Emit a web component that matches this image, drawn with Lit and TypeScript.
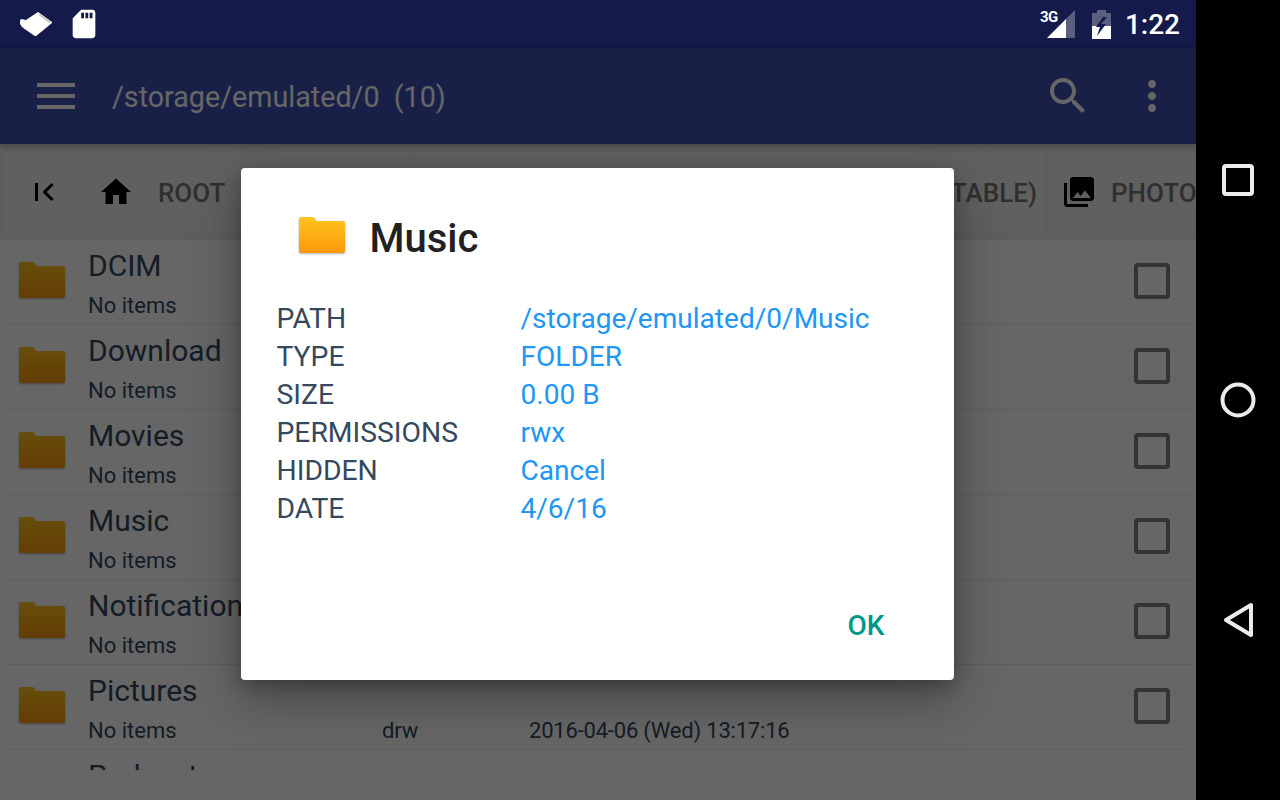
import { LitElement, html, css, svg } from "lit";
import { customElement } from "lit/decorators.js";

const folder = (id: string) => html`<svg class="folder" viewBox="0 0 47 37" width="47" height="37">
  <defs><linearGradient id=${id} x1="0" y1="0" x2="0" y2="1"><stop offset="0" stop-color="#ffc41c"/><stop offset="1" stop-color="#fb980a"/></linearGradient></defs>
  <path d="M2 0h11q2 0 3 2l1 2h27q2 0 2 2v28q0 2-2 2H2q-2 0-2-2V2q0-2 2-2z" fill="url(#${id})"/>
</svg>`;

const icon = (d: string, size: number) => html`<svg viewBox="0 0 24 24" width=${size} height=${size}>${svg`<path d=${d}/>`}</svg>`;

const rows = ["DCIM", "Download", "Movies", "Music", "Notifications", "Pictures", "Podcasts"];
const tabs: [string, string, number, string][] = [
  ["M10 20v-6h4v6h5v-8h3L12 3 2 12h3v8z", "ROOT", 160, ""],
  ["M10 20v-6h4v6h5v-8h3L12 3 2 12h3v8z", "DEVICE", 162, ""],
  ["M18 2h-8L4.02 8 4 20c0 1.1.9 2 2 2h12c1.1 0 2-.9 2-2V4c0-1.1-.9-2-2-2z", "INTERNAL STORAGE", 311, ""],
  ["M18 2h-8L4.02 8 4 20c0 1.1.9 2 2 2h12c1.1 0 2-.9 2-2V4c0-1.1-.9-2-2-2z", "USB (PORTABLE)", 317, "end"],
  ["M22 16V4c0-1.1-.9-2-2-2H8c-1.1 0-2 .9-2 2v12c0 1.1.9 2 2 2h12c1.1 0 2-.9 2-2zm-11-4l2.03 2.71L16 11l4 5H8l3-4zM2 6v14c0 1.1.9 2 2 2h14v-2H4V6H2z", "PHOTOS", 240, "tight"],
];
const info = [
  ["PATH", "/storage/emulated/0/Music"],
  ["TYPE", "FOLDER"],
  ["SIZE", "0.00 B"],
  ["PERMISSIONS", "rwx"],
  ["HIDDEN", "Cancel"],
  ["DATE", "4/6/16"],
];

@customElement("app-root")
export class AppRoot extends LitElement {
  static styles = css`
    :host { display: block; width: 1280px; height: 800px; overflow: hidden; font-family: Roboto, "Noto Sans", sans-serif; background: #000; }
    .screen { display: flex; width: 1280px; height: 800px; }
    .main { width: 1196px; height: 800px; display: flex; flex-direction: column; position: relative; background: #fff; overflow: hidden; }
    .nav { width: 84px; height: 800px; background: #000; display: grid; grid-template-rows: repeat(3, 220px); padding: 70px 0; box-sizing: border-box; justify-items: center; align-items: center; }
    .nav svg { display: block; }

    .status { height: 48px; flex: none; background: #141a4a; display: flex; align-items: center; color: #fff; padding: 0 16px 0 20px; box-sizing: border-box; }
    .status svg { display: block; fill: #fff; }
    .sd { margin-left: 15px; }
    .spacer { flex: 1; }
    .signal { position: relative; width: 35px; height: 28px; margin-right: 17px; display: flex; justify-content: flex-end; }
    .three-g { position: absolute; left: 0; top: 0; font-size: 15px; line-height: 15px; font-weight: 700; letter-spacing: -0.5px; }
    .battery { margin-right: 14px; }
    .time { font-size: 28px; font-weight: 500; line-height: 32px; padding-top: 2px; }

    .toolbar { height: 96px; flex: none; background: #3f51b5; display: flex; align-items: center; color: #fff; position: relative; z-index: 1; box-shadow: 0 2px 6px rgba(0,0,0,.3); }
    .burger { width: 38px; margin-left: 37px; display: flex; flex-direction: column; gap: 7px; }
    .burger i { display: block; height: 4px; background: #fff; }
    .path { font-size: 28.7px; line-height: 36px; padding-top: 2px; margin-left: 37px; flex: 1; white-space: pre; }
    .toolbar svg { display: block; fill: #fff; }
    .search { margin-right: 36px; }
    .more { margin-right: 20px; }

    .tabs { height: 96px; flex: none; background: #ebebeb; display: flex; align-items: center; gap: 3px; padding-left: 4px; overflow: hidden; }
    .tab { height: 80px; flex: none; background: #f1f1f1; display: flex; align-items: center; box-sizing: border-box; padding-left: 11px; color: #757575; font-size: 26px; font-weight: 500; white-space: nowrap; overflow: hidden; }
    .tab span { padding-top: 2px; }
    .tab svg { display: block; flex: none; margin-right: 24px; fill: #000; }
    .tab.first { width: 80px; padding-left: 22px; }
    .tab.first svg { margin: 0; }
    .tab.end { justify-content: space-between; padding-right: 9px; }
    .tab.tight { padding-left: 12px; }
    .tab.tight svg { margin-right: 14px; }

    .list { height: 530px; flex: none; overflow: hidden; color: #34495e; }
    .row { height: 85px; margin: 0 6px; box-sizing: border-box; border-bottom: 1px solid #ececec; display: grid; grid-template-columns: 69px 294px 147px 1fr 36px; padding: 0 20px 0 13px; grid-template-rows: 53px 31px; align-items: center; }
    .row .folder { grid-row: 1 / 3; grid-column: 1; align-self: center; margin-bottom: 4px; filter: drop-shadow(0 1px 1px rgba(0,0,0,.3)); }
    .name { grid-column: 2 / 4; grid-row: 1; font-size: 30px; line-height: 40px; align-self: end; margin-bottom: 7px; white-space: nowrap; }
    .sub { grid-column: 2; grid-row: 2; font-size: 22px; line-height: 26px; align-self: start; }
    .perm { grid-column: 3; grid-row: 2; font-size: 22px; line-height: 26px; align-self: start; letter-spacing: -0.2px; }
    .date { grid-column: 4; grid-row: 2; font-size: 22px; line-height: 26px; align-self: start; letter-spacing: -0.2px; white-space: nowrap; }
    .check { grid-column: 5; grid-row: 1 / 3; width: 36px; height: 36px; margin-bottom: 2px; box-sizing: border-box; border: 4px solid #808080; border-radius: 4px; }

    .scrim { position: absolute; left: 0; right: 0; top: 48px; bottom: 0; z-index: 2; background: rgba(0,0,0,.6); display: flex; align-items: center; justify-content: center; }
    .dialog { width: 713px; height: 512px; margin-right: 2px; background: #fff; border-radius: 4px; box-shadow: 0 18px 50px rgba(0,0,0,.34), 0 6px 16px rgba(0,0,0,.2); box-sizing: border-box; padding: 50px 36px 0; display: flex; flex-direction: column; }
    .head { display: flex; align-items: center; height: 40px; padding-left: 22px; gap: 24px; color: #212121; font-size: 40px; font-weight: 500; }
    .head .folder { flex: none; margin-bottom: 6px; filter: drop-shadow(0 1px 1px rgba(0,0,0,.3)); }
    .table { display: grid; grid-template-columns: 244px 1fr; grid-auto-rows: 38px; margin-top: 41px; align-items: center; }
    .k { color: #34495e; font-size: 28.3px; }
    .v { color: #2196f3; font-size: 28.05px; }
    .actions { margin-top: auto; display: flex; justify-content: flex-end; padding: 0 33px 35px 0; }
    .ok { color: #009688; font-size: 28px; font-weight: 500; line-height: 38px; }
  `;

  render() {
    return html`<div class="screen">
      <div class="main">
        <div class="status">
          <svg width="32" height="24" viewBox="0 0 32 24">
            <path d="M1 7.5 6 8.5 18 .5 32 10.5 15.5 24 2.5 15 0 11z" stroke="#fff" stroke-width="1" stroke-linejoin="round"/>
            <path d="M20 1.5 31 9.5 29 11 18.5 3z" fill="#c9c9c9"/>
          </svg>
          <svg class="sd" width="34" height="34" viewBox="0 0 24 24"><path d="M18 2h-8L4.02 8 4 20c0 1.1.9 2 2 2h12c1.1 0 2-.9 2-2V4c0-1.1-.9-2-2-2zm-6 6h-2V4h2v4zm3 0h-2V4h2v4zm3 0h-2V4h2v4z"/></svg>
          <div class="spacer"></div>
          <div class="signal">
            <span class="three-g">3G</span>
            <svg width="28" height="28" viewBox="0 0 28 28">
              <path d="M0 28 19 9v19z"/><path d="M19 9l9-9v28h-9z" fill-opacity=".3"/>
            </svg>
          </div>
          <svg class="battery" width="19" height="29" viewBox="0 0 19 29">
            <path d="M5 0h9v3h5v13H0V3h5z" fill-opacity=".3"/>
            <path d="M0 16h19v13H0z"/>
            <path d="M11 7 4 17h4l-3 9 9-12H9l6-7z" fill="#141a4a"/>
          </svg>
          <span class="time">1:22</span>
        </div>
        <div class="toolbar">
          <div class="burger"><i></i><i></i><i></i></div>
          <span class="path">/storage/emulated/0  (10)</span>
          <div class="search">${icon("M15.5 14h-.79l-.28-.27C15.41 12.59 16 11.11 16 9.5 16 5.91 13.09 3 9.5 3S3 5.91 3 9.5 5.91 16 9.5 16c1.61 0 3.09-.59 4.23-1.57l.27.28v.79l5 4.99L20.49 19l-4.99-5zm-6 0C7.01 14 5 11.99 5 9.5S7.01 5 9.5 5 14 7.01 14 9.5 11.99 14 9.5 14z", 48)}</div>
          <div class="more">${icon("M12 8c1.1 0 2-.9 2-2s-.9-2-2-2-2 .9-2 2 .9 2 2 2zm0 2c-1.1 0-2 .9-2 2s.9 2 2 2 2-.9 2-2-.9-2-2-2zm0 6c-1.1 0-2 .9-2 2s.9 2 2 2 2-.9 2-2-.9-2-2-2z", 48)}</div>
        </div>
        <div class="tabs">
          <div class="tab first">${icon("M18.41 16.59L13.82 12l4.59-4.59L17 6l-6 6 6 6zM6 6h2v12H6z", 36)}</div>
          ${tabs.map(([d, label, w, cls]) => html`<div class="tab ${cls}" style="width:${w}px">${icon(d, 36)}<span>${label}</span></div>`)}
        </div>
        <div class="list">
          ${rows.map((n, i) => html`<div class="row">
            ${folder(`rf${i}`)}
            <span class="name">${n}</span>
            <span class="sub">No items</span>
            <span class="perm">drw</span>
            <span class="date">2016-04-06 (Wed) 13:17:16</span>
            <span class="check"></span>
          </div>`)}
        </div>
        <div class="scrim">
          <div class="dialog">
            <div class="head">${folder("df")}<span>Music</span></div>
            <div class="table">
              ${info.map(([k, v]) => html`<span class="k">${k}</span><span class="v">${v}</span>`)}
            </div>
            <div class="actions"><span class="ok">OK</span></div>
          </div>
        </div>
      </div>
      <div class="nav">
        <svg width="32" height="32" viewBox="0 0 32 32"><rect x="2" y="2" width="28" height="28" rx="2" fill="none" stroke="#ececec" stroke-width="4"/></svg>
        <svg width="36" height="36" viewBox="0 0 36 36"><circle cx="18" cy="18" r="15.5" fill="none" stroke="#ececec" stroke-width="4"/></svg>
        <svg width="32" height="36" viewBox="0 0 32 36"><path d="M29 3v30L4 18z" fill="none" stroke="#ececec" stroke-width="4" stroke-linejoin="round"/></svg>
      </div>
    </div>`;
  }
}
